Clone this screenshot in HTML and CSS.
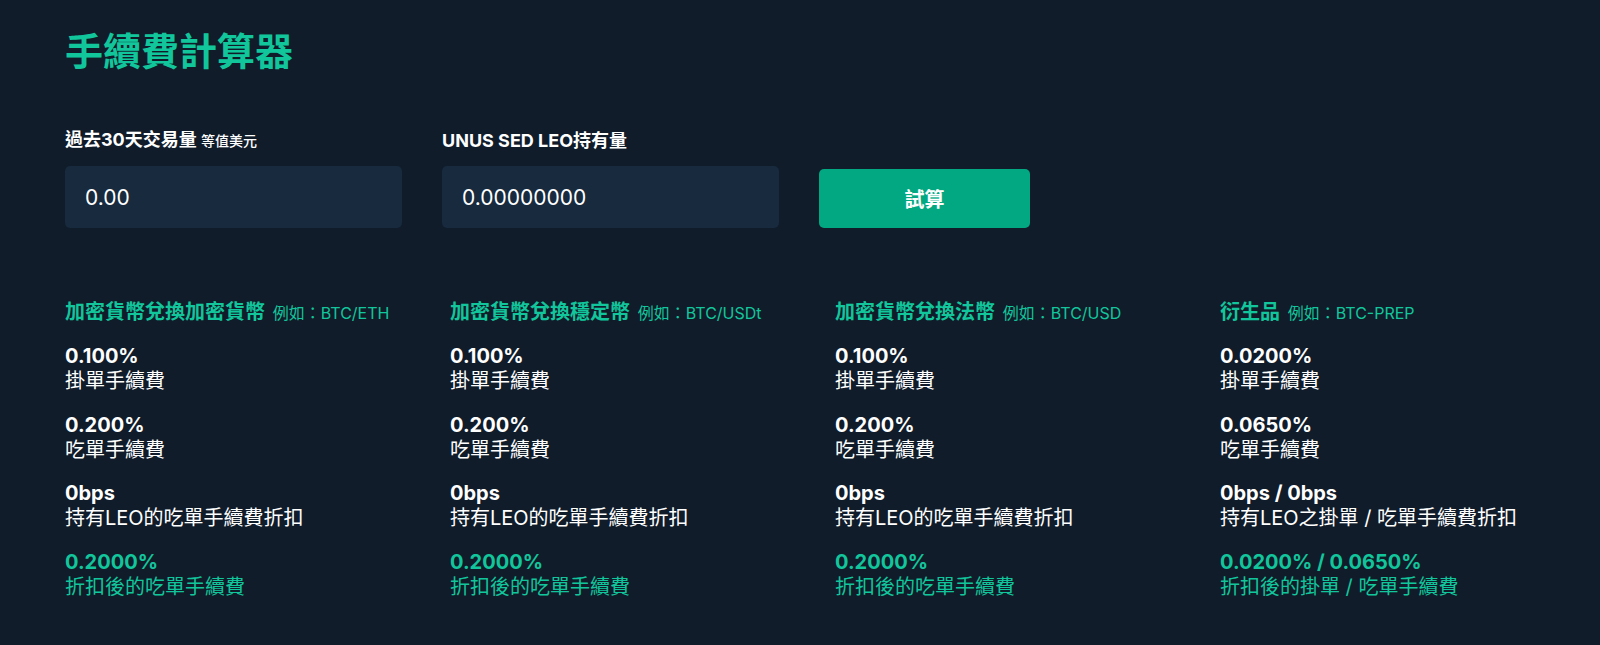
FILE: index.html
```html
<!DOCTYPE html>
<html lang="zh-Hant">
<head>
<meta charset="utf-8">
<title>手續費計算器</title>
<link rel="stylesheet" href="styles.css">
</head>
<body>
<main class="page">
  <h1 class="title">手續費計算器</h1>

  <form class="calc">
    <div class="field">
      <label class="field-label">過去30天交易量 <span class="unit">等值美元</span></label>
      <input class="input" type="text" value="0.00">
    </div>
    <div class="field">
      <label class="field-label">UNUS SED LEO持有量</label>
      <input class="input" type="text" value="0.00000000">
    </div>
    <button class="btn" type="button">試算</button>
  </form>

  <section class="rates">
    <div class="col">
      <h2 class="col-title">加密貨幣兌換加密貨幣 <span class="eg">例如：BTC/ETH</span></h2>
      <div class="item"><div class="val">0.100%</div><div class="lbl">掛單手續費</div></div>
      <div class="item"><div class="val">0.200%</div><div class="lbl">吃單手續費</div></div>
      <div class="item"><div class="val">0bps</div><div class="lbl">持有LEO的吃單手續費折扣</div></div>
      <div class="item hl"><div class="val">0.2000%</div><div class="lbl">折扣後的吃單手續費</div></div>
    </div>
    <div class="col">
      <h2 class="col-title">加密貨幣兌換穩定幣 <span class="eg">例如：BTC/USDt</span></h2>
      <div class="item"><div class="val">0.100%</div><div class="lbl">掛單手續費</div></div>
      <div class="item"><div class="val">0.200%</div><div class="lbl">吃單手續費</div></div>
      <div class="item"><div class="val">0bps</div><div class="lbl">持有LEO的吃單手續費折扣</div></div>
      <div class="item hl"><div class="val">0.2000%</div><div class="lbl">折扣後的吃單手續費</div></div>
    </div>
    <div class="col">
      <h2 class="col-title">加密貨幣兌換法幣 <span class="eg">例如：BTC/USD</span></h2>
      <div class="item"><div class="val">0.100%</div><div class="lbl">掛單手續費</div></div>
      <div class="item"><div class="val">0.200%</div><div class="lbl">吃單手續費</div></div>
      <div class="item"><div class="val">0bps</div><div class="lbl">持有LEO的吃單手續費折扣</div></div>
      <div class="item hl"><div class="val">0.2000%</div><div class="lbl">折扣後的吃單手續費</div></div>
    </div>
    <div class="col">
      <h2 class="col-title">衍生品 <span class="eg">例如：BTC-PREP</span></h2>
      <div class="item"><div class="val">0.0200%</div><div class="lbl">掛單手續費</div></div>
      <div class="item"><div class="val">0.0650%</div><div class="lbl">吃單手續費</div></div>
      <div class="item"><div class="val">0bps / 0bps</div><div class="lbl">持有LEO之掛單 / 吃單手續費折扣</div></div>
      <div class="item hl"><div class="val">0.0200% / 0.0650%</div><div class="lbl">折扣後的掛單 / 吃單手續費</div></div>
    </div>
  </section>
</main>
</body>
</html>
```

FILE: styles.css
```css
* { box-sizing: border-box; }

html, body {
  margin: 0;
  height: 100%;
  background: #101c2a;
}

body {
  font-family: Inter, "Noto Sans CJK TC", sans-serif;
  color: #ffffff;
}

.page {
  padding: 29px 65px 0;
}

.title {
  margin: 0;
  font-size: 38px;
  line-height: 44px;
  font-weight: 700;
  color: #12c69c;
}

.calc {
  display: flex;
  align-items: flex-end;
  gap: 40px;
  margin-top: 55px;
}

.field {
  display: flex;
  flex-direction: column;
  gap: 13px;
}

.field-label {
  font-size: 18px;
  line-height: 24px;
  font-weight: 700;
  color: #ffffff;
}

.unit {
  font-size: 14px;
  font-weight: 500;
}

.input {
  width: 337px;
  height: 62px;
  padding: 0 20px;
  border: 0;
  border-radius: 5px;
  background: #172a3e;
  color: #ffffff;
  font-family: Inter, "Noto Sans CJK TC", sans-serif;
  font-size: 21px;
  outline: none;
}

.btn {
  width: 211px;
  height: 59px;
  border: 0;
  border-radius: 5px;
  background: #02a882;
  color: #ffffff;
  font-family: Inter, "Noto Sans CJK TC", sans-serif;
  font-size: 20px;
  font-weight: 700;
}

.rates {
  display: grid;
  grid-template-columns: repeat(4, 345px);
  column-gap: 40px;
  margin-top: 71px;
}

.col-title {
  margin: 0 0 18px;
  font-size: 20px;
  line-height: 26px;
  font-weight: 700;
  color: #12c69c;
}

.eg {
  margin-left: 3px;
  font-size: 16px;
  font-weight: 400;
}

.item + .item {
  margin-top: 18.5px;
}

.val {
  font-size: 20px;
  line-height: 24px;
  font-weight: 700;
}

.lbl {
  font-size: 20px;
  line-height: 26px;
  font-weight: 400;
}

.item.hl {
  color: #12c69c;
}
```
